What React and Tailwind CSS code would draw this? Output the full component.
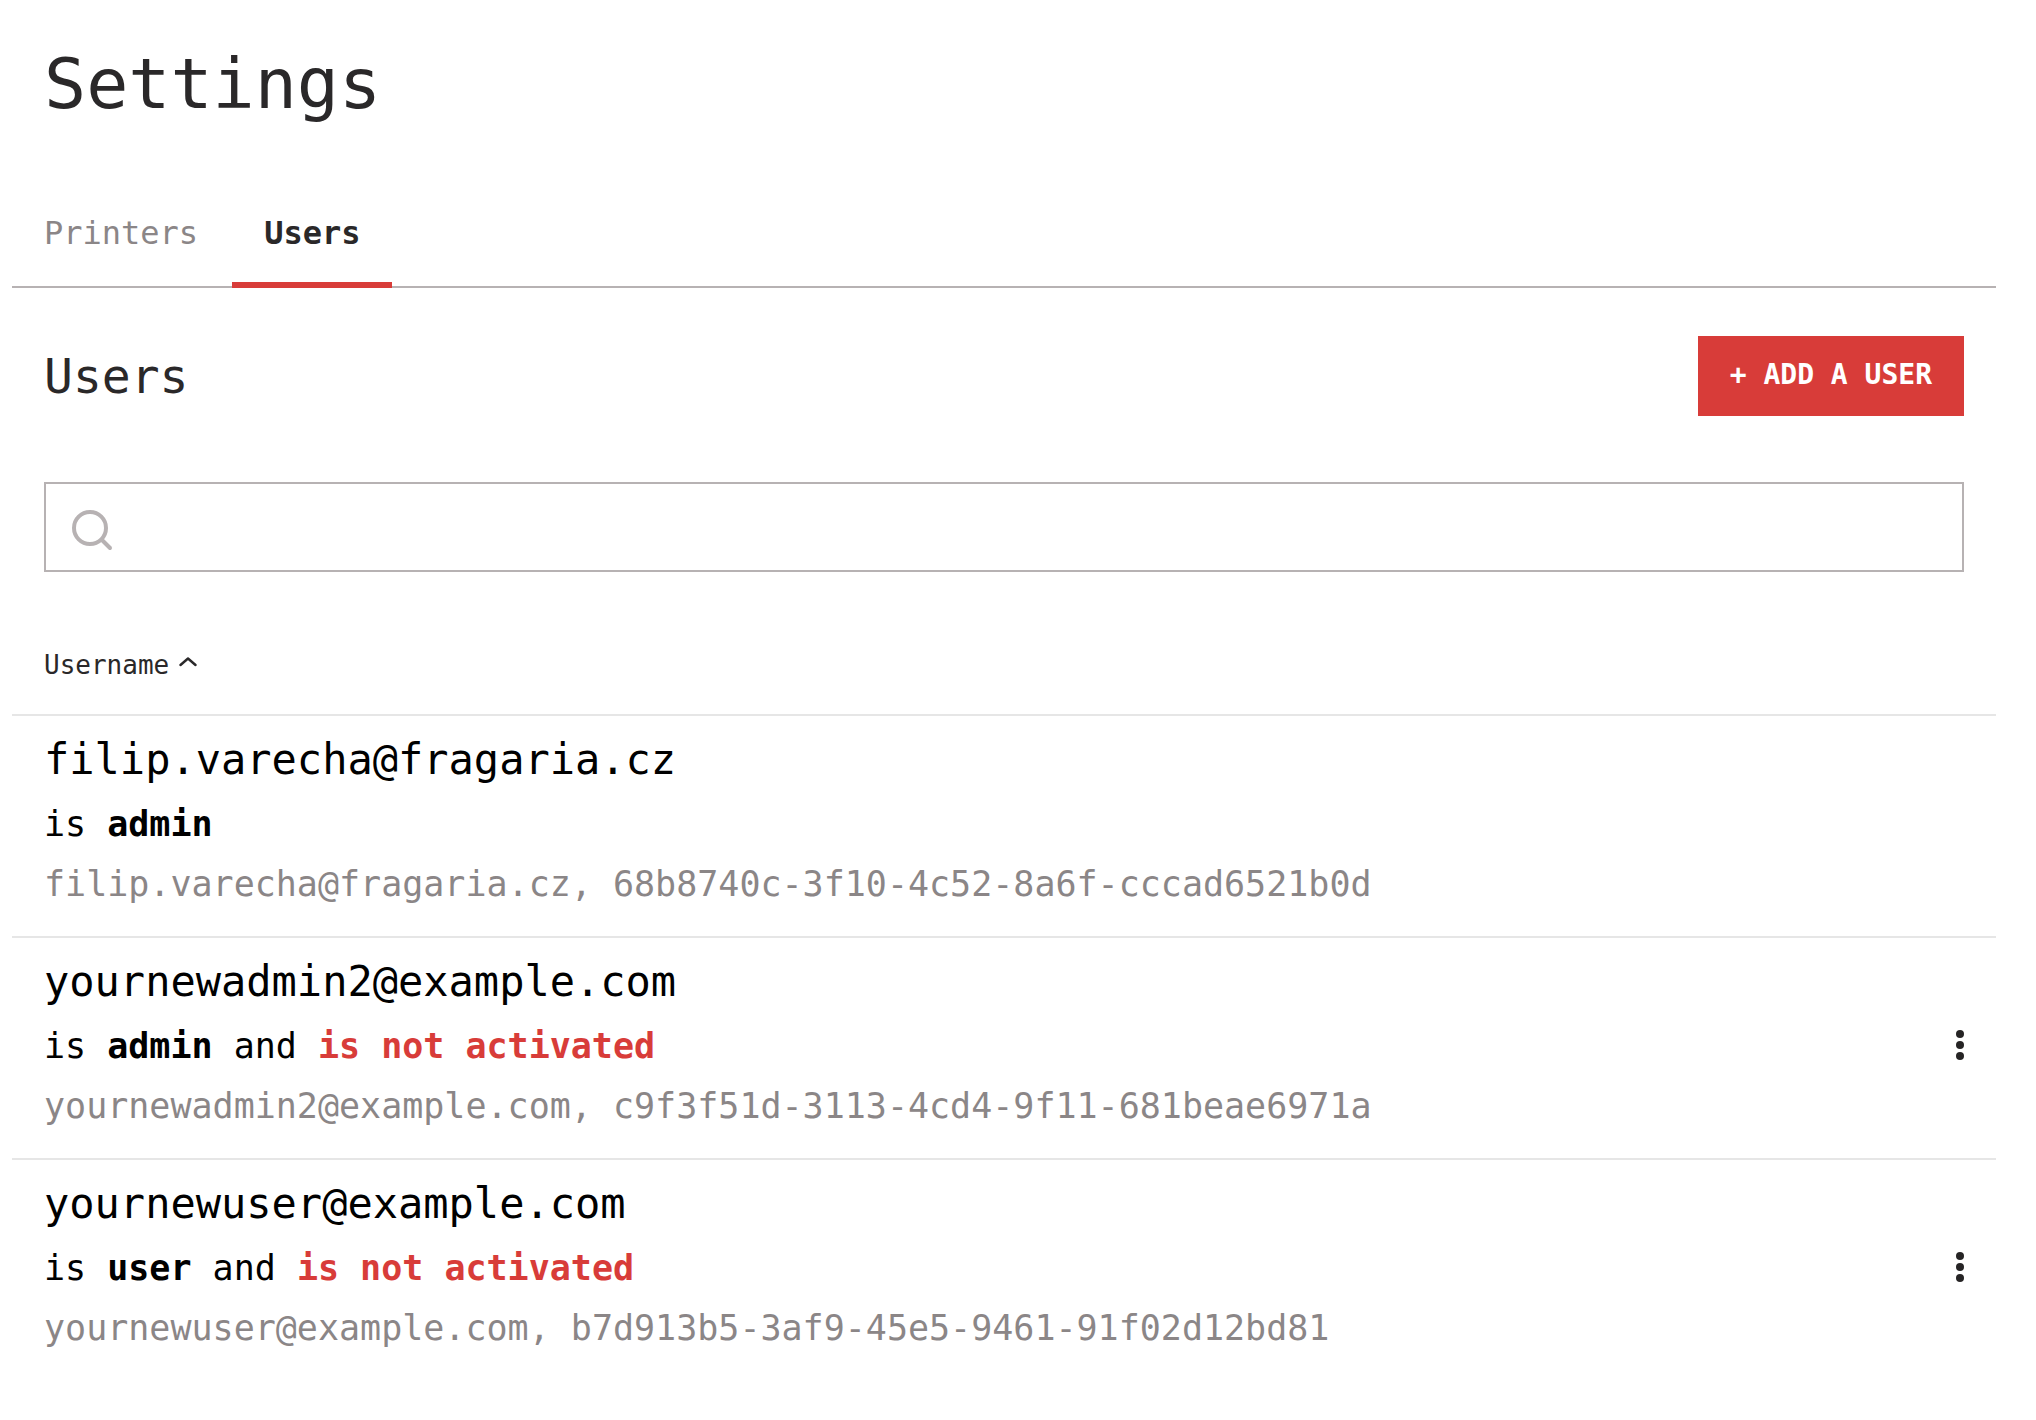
import { useState } from "react";

const users = [
  {
    name: "filip.varecha@fragaria.cz",
    role: "admin",
    id: "68b8740c-3f10-4c52-8a6f-cccad6521b0d",
    activated: true,
  },
  {
    name: "yournewadmin2@example.com",
    role: "admin",
    id: "c9f3f51d-3113-4cd4-9f11-681beae6971a",
    activated: false,
  },
  {
    name: "yournewuser@example.com",
    role: "user",
    id: "b7d913b5-3af9-45e5-9461-91f02d12bd81",
    activated: false,
  },
];

function SearchIcon() {
  return (
    <svg width="48" height="48" viewBox="0 0 48 48" fill="none" stroke="currentColor" strokeWidth="4" strokeLinecap="round" aria-hidden="true">
      <circle cx="22" cy="25" r="16" />
      <path d="M34 37l8 8" />
    </svg>
  );
}

function ChevronUpIcon() {
  return (
    <svg width="20" height="16" viewBox="0 0 20 16" fill="none" stroke="currentColor" strokeWidth="2.4" strokeLinecap="round" strokeLinejoin="round" aria-hidden="true">
      <path d="M3.500 8L11 1.500L18.500 8" />
    </svg>
  );
}

function DotsIcon() {
  return (
    <svg width="8" height="32" viewBox="0 0 8 32" fill="currentColor" aria-hidden="true">
      <circle cx="4" cy="5" r="4" />
      <circle cx="4" cy="16" r="4" />
      <circle cx="4" cy="27" r="4" />
    </svg>
  );
}

function UserRow({ user, last }) {
  const border = last ? "" : "border-b-2 border-[#e6e6e6]";
  return (
    <tr>
      <td className={`pt-[18px] pb-[30px] pl-8 ${border}`}>
        <p className="text-[42px] leading-[52px]">{user.name}</p>
        <p className="mt-4 text-[35px] leading-[44px]">
          is <strong className="font-bold">{user.role}</strong>
          {!user.activated && (
            <>
              {" and "}
              <strong className="font-bold text-[#d83c39]">is not activated</strong>
            </>
          )}
        </p>
        <p className="mt-4 text-[35px] leading-[44px] text-[#8b8687]">
          {user.name}, {user.id}
        </p>
      </td>
      <td className={`w-24 pr-8 text-right align-middle ${border}`}>
        {!user.activated && (
          <button type="button" aria-label={`Actions for ${user.name}`} className="inline-flex cursor-pointer text-[#262425]">
            <DotsIcon />
          </button>
        )}
      </td>
    </tr>
  );
}

export default function App() {
  const [query, setQuery] = useState("");
  const shown = users.filter((u) => u.name.includes(query));
  return (
    <main className="mr-10 ml-3 bg-white pt-11 pb-10 font-['DejaVu_Sans_Mono','Liberation_Mono',monospace] text-black">
      <h1 className="px-8 text-[70px] leading-[80px] text-[#2a2829]">Settings</h1>

      <nav className="mt-[60px] flex gap-[2px] border-b-2 border-[#b7b2b3] text-[32px] leading-10">
        <a href="#printers" className="px-8 py-[29px] text-[#8b8687]">
          Printers
        </a>
        <a href="#users" aria-current="page" className="-mb-[2px] border-b-6 border-[#d83c39] px-8 py-[29px] font-bold text-[#2a2829]">
          Users
        </a>
      </nav>

      <section>
        <div className="mt-12 flex items-center justify-between px-8">
          <h2 className="text-[48px] leading-[60px] text-[#2a2829]">Users</h2>
          <button type="button" className="cursor-pointer bg-[#d83c39] px-8 pt-[19px] pb-[21px] text-[28px] leading-10 font-bold text-white">
            + ADD A USER
          </button>
        </div>

        <div className="mt-[66px] px-8">
          <label className="flex items-center border-2 border-[#b7b2b3] pl-[22px] text-[#b7b2b3]">
            <SearchIcon />
            <input
              type="search"
              aria-label="Search users"
              value={query}
              onChange={(e) => setQuery(e.target.value)}
              className="min-w-0 flex-1 px-4 py-[21px] text-[35px] leading-[44px] text-black outline-none"
            />
          </label>
        </div>

        <table className="w-full border-separate border-spacing-0">
          <thead>
            <tr>
              <th colSpan={2} aria-sort="ascending" className="border-b-2 border-[#e6e6e6] px-8 pt-[76px] pb-8 text-left font-normal">
                <button type="button" className="flex cursor-pointer items-center gap-2 text-[26px] leading-[34px] text-[#2a2829]">
                  Username
                  <ChevronUpIcon />
                </button>
              </th>
            </tr>
          </thead>
          <tbody>
            {shown.map((user, i) => (
              <UserRow key={user.id} user={user} last={i === shown.length - 1} />
            ))}
          </tbody>
        </table>
      </section>
    </main>
  );
}
